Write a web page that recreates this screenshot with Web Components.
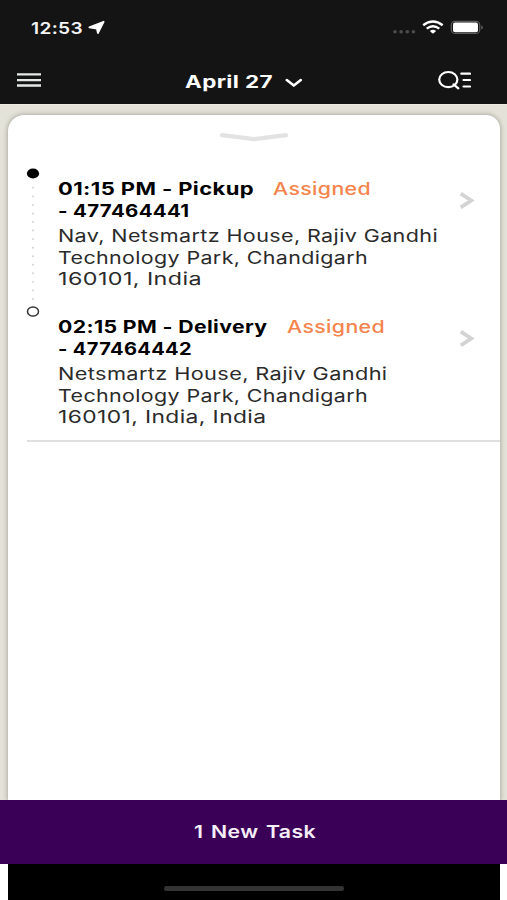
<!DOCTYPE html>
<html lang="en">
<head>
<meta charset="utf-8">
<title>Tasks</title>
<style>
    body {
        margin: 0;
        font-family: Inter, "Open Sans", sans-serif;
    }
</style>
</head>
<body>
<task-app>
    <status-bar slot="top" time="12:53"></status-bar>
    <app-header slot="top" date="April 27"></app-header>
    <task-card>
        <task-stop kind="pickup">
            <wide-text slot="title" width="196">01:15 PM - Pickup</wide-text>
            <wide-text slot="status" width="98">Assigned</wide-text>
            <wide-text slot="number" width="131.5">- 477464441</wide-text>
            <wide-text slot="address" width="380">Nav, Netsmartz House, Rajiv Gandhi</wide-text>
            <wide-text slot="address" width="310">Technology Park, Chandigarh</wide-text>
            <wide-text slot="address" width="144">160101, India</wide-text>
        </task-stop>
        <task-stop kind="delivery">
            <wide-text slot="title" width="209.5">02:15 PM - Delivery</wide-text>
            <wide-text slot="status" width="98">Assigned</wide-text>
            <wide-text slot="number" width="134">- 477464442</wide-text>
            <wide-text slot="address" width="329.5">Netsmartz House, Rajiv Gandhi</wide-text>
            <wide-text slot="address" width="310">Technology Park, Chandigarh</wide-text>
            <wide-text slot="address" width="208.5">160101, India, India</wide-text>
        </task-stop>
    </task-card>
    <new-task-bar slot="bottom"><wide-text width="122">1 New Task</wide-text></new-task-bar>
    <home-indicator slot="bottom"></home-indicator>
</task-app>

<script>
// One line of text, set in an extended width
class WideText extends HTMLElement {
    connectedCallback() {
        const width = Number(this.getAttribute('width'));
        this.attachShadow({ mode: 'open' });
        this.shadowRoot.innerHTML = `
            <style>
                :host {
                    display: block;
                    flex: none;
                    width: ${width}px;
                    white-space: nowrap;
                }
                span {
                    display: inline-block;
                    vertical-align: top;
                    transform-origin: 0 0;
                    letter-spacing: 0.3px;
                }
            </style>
            <span><slot></slot></span>
        `;
        const span = this.shadowRoot.querySelector('span');
        const natural = span.getBoundingClientRect().width;
        if (natural) {
            span.style.transform = `scaleX(${width / natural})`;
        }
    }
}

class TaskApp extends HTMLElement {
    connectedCallback() {
        this.attachShadow({ mode: 'open' });
        this.shadowRoot.innerHTML = `
            <style>
                :host {
                    display: flex;
                    flex-direction: column;
                    width: 507px;
                    height: 900px;
                    overflow: hidden;
                    background: #fff;
                }
                header {
                    height: 104px;
                    background: #141414;
                }
                main {
                    flex: 1;
                    display: flex;
                    box-sizing: border-box;
                    padding: 9.5px 7.5px 0;
                    background: #e4e3d9;
                    border-top: 1px solid #efebe4;
                    overflow: hidden;
                }
            </style>
            <header><slot name="top"></slot></header>
            <main><slot></slot></main>
            <footer><slot name="bottom"></slot></footer>
        `;
    }
}

class StatusBar extends HTMLElement {
    connectedCallback() {
        this.attachShadow({ mode: 'open' });
        this.shadowRoot.innerHTML = `
            <style>
                :host {
                    display: flex;
                    height: 54px;
                    box-sizing: border-box;
                    padding: 17px 23px 0 31px;
                    justify-content: space-between;
                    color: #f5f5f5;
                    font-size: 16.5px;
                    font-weight: 600;
                    line-height: 22px;
                }
                .left, .right {
                    display: flex;
                }
                .left {
                    gap: 5px;
                }
                svg {
                    display: block;
                }
            </style>
            <div class="left">
                <wide-text width="52">${this.getAttribute('time')}</wide-text>
                <svg width="18" height="22" viewBox="0 0 18 22">
                    <path d="M15.6 4.8 9.9 16 8.9 11.6 1.4 10.3Z" fill="#fff" stroke="#fff" stroke-width="1.8" stroke-linejoin="round"/>
                </svg>
            </div>
            <div class="right">
                <svg width="94" height="22" viewBox="390 17 94 22">
                    <g fill="#4d4d4d">
                        <circle cx="395" cy="31.8" r="1.8"/><circle cx="401.1" cy="31.8" r="1.8"/>
                        <circle cx="407.3" cy="31.8" r="1.8"/><circle cx="413.4" cy="31.8" r="1.8"/>
                    </g>
                    <g fill="none" stroke="#fff" stroke-width="2.4">
                        <path d="M423.2 25.2Q432.9 17.8 442.7 25.2"/>
                        <path d="M426.7 28.6Q432.9 23.7 439.3 28.6"/>
                    </g>
                    <path d="M429.8 30.9Q432.9 28.6 436.1 30.9L433.6 33.2Q432.9 33.7 432.3 33.2Z" fill="#fff"/>
                    <rect x="451.3" y="21.3" width="28.4" height="12.2" rx="3.6" fill="none" stroke="#5c5c5c" stroke-width="1.2"/>
                    <rect x="453" y="22.6" width="25" height="9.6" rx="2" fill="#fff"/>
                    <path d="M481.2 25.3Q483 26 483 27.4T481.2 29.5Z" fill="#5c5c5c"/>
                </svg>
            </div>
        `;
    }
}

class AppHeader extends HTMLElement {
    connectedCallback() {
        this.attachShadow({ mode: 'open' });
        this.shadowRoot.innerHTML = `
            <style>
                :host {
                    display: grid;
                    grid-template-columns: 1fr auto 1fr;
                    align-items: center;
                    height: 50px;
                    box-sizing: border-box;
                    padding: 2px 36px 0 17px;
                    color: #fff;
                    font-size: 17px;
                    font-weight: 700;
                    line-height: 22px;
                }
                .date {
                    display: flex;
                    align-items: center;
                    gap: 12px;
                    margin-left: -2px;
                    padding-top: 3px;
                }
                .search {
                    justify-self: end;
                }
                svg {
                    display: block;
                }
            </style>
            <svg width="24" height="16" viewBox="0 0 24 16">
                <path d="M0 2.3H24M0 8.1H24M0 13.5H24" stroke="#e6e8e8" stroke-width="2.3"/>
            </svg>
            <div class="date">
                <wide-text width="88">${this.getAttribute('date')}</wide-text>
                <svg width="17" height="22" viewBox="0 0 17 22">
                    <path d="M1.8 9.1 8.8 14.6 15.8 9.1" fill="none" stroke="#fff" stroke-width="2.6" stroke-linecap="round" stroke-linejoin="round"/>
                </svg>
            </div>
            <svg class="search" width="33" height="20" viewBox="438 70 33 20">
                <g fill="none" stroke="#fff" stroke-width="2.2" stroke-linecap="round">
                    <ellipse cx="448.3" cy="79.6" rx="9.1" ry="7.6"/>
                    <path d="M453.6 84.3 458.3 88.3M461.3 73.7H470M463.5 80H470M463.5 86.5H470"/>
                </g>
            </svg>
        `;
    }
}

class TaskCard extends HTMLElement {
    connectedCallback() {
        this.attachShadow({ mode: 'open' });
        this.shadowRoot.innerHTML = `
            <style>
                :host {
                    display: block;
                    flex: 1;
                    background: #fff;
                    border-radius: 16px 14px 0 0;
                    box-shadow: 0 0 4px 1px rgba(90, 88, 75, 0.38);
                }
                .handle {
                    display: block;
                    margin: 0 auto;
                    padding-top: 14px;
                }
                .stops {
                    margin-left: 19px;
                    padding-top: 19px;
                    border-bottom: 2px solid #e0e0e0;
                }
            </style>
            <svg class="handle" width="70" height="18" viewBox="0 0 70 18">
                <path d="M3 6.2 35 10.2 67 6.2" fill="none" stroke="#e2e2e2" stroke-width="4.2" stroke-linecap="round" stroke-linejoin="round"/>
            </svg>
            <div class="stops"><slot></slot></div>
        `;
    }
}

class TaskStop extends HTMLElement {
    connectedCallback() {
        const pickup = this.getAttribute('kind') === 'pickup';
        // the dotted line runs from the pickup down to the delivery
        const marker = pickup
            ? `<ellipse cx="6" cy="7.5" rx="6.1" ry="5.1" fill="#000"/>
               <path d="M6 21.8V134" stroke="#cfcfcf" stroke-width="1.9" stroke-linecap="round" stroke-dasharray="0 8.55"/>`
            : `<ellipse cx="6" cy="7.5" rx="5.5" ry="4.6" fill="#fff" stroke="#333" stroke-width="1.5"/>`;

        this.attachShadow({ mode: 'open' });
        this.shadowRoot.innerHTML = `
            <style>
                :host {
                    display: flex;
                    height: ${pickup ? 138 : 136.5}px;
                    font-size: 17.2px;
                    line-height: 21.5px;
                }
                .marker {
                    flex: none;
                    overflow: visible;
                }
                .text {
                    width: 395px;
                    margin-left: 19.5px;
                    padding-top: 12.8px;
                    color: #2b2b2b;
                }
                .title {
                    display: flex;
                    gap: 19px;
                    color: #000;
                    font-weight: 700;
                }
                .number {
                    color: #000;
                    font-weight: 700;
                    margin-bottom: 4px;
                }
                .status {
                    color: #f5844c;
                    font-weight: 500;
                }
                .arrow {
                    margin: 24px 0 0 6px;
                }
            </style>
            <svg class="marker" width="12" height="138" viewBox="0 0 12 138">${marker}</svg>
            <div class="text">
                <div class="title">
                    <slot name="title"></slot>
                    <div class="status"><slot name="status"></slot></div>
                </div>
                <div class="number"><slot name="number"></slot></div>
                <slot name="address"></slot>
            </div>
            <svg class="arrow" width="16" height="20" viewBox="0 0 16 20">
                <path d="M1.8 3.6 12.3 10.5 1.8 17.4" fill="none" stroke="#d3d3d3" stroke-width="3.7"/>
            </svg>
        `;
    }
}

class NewTaskBar extends HTMLElement {
    connectedCallback() {
        this.attachShadow({ mode: 'open' });
        this.shadowRoot.innerHTML = `
            <style>
                :host {
                    display: flex;
                    align-items: center;
                    justify-content: center;
                    height: 63.5px;
                    padding-left: 2px;
                    background: #3a0057;
                    color: #f6effa;
                    font-size: 17px;
                    font-weight: 600;
                    line-height: 22px;
                    word-spacing: 1.5px;
                }
            </style>
            <slot></slot>
        `;
    }
}

class HomeIndicator extends HTMLElement {
    connectedCallback() {
        this.attachShadow({ mode: 'open' });
        this.shadowRoot.innerHTML = `
            <style>
                :host {
                    display: flex;
                    justify-content: center;
                    height: 36.5px;
                    margin: 0 7.5px;
                    background: #000;
                }
                .pill {
                    width: 180px;
                    height: 5px;
                    margin-top: 22.5px;
                    border-radius: 3px;
                    background: #333;
                }
            </style>
            <div class="pill"></div>
        `;
    }
}

// containers first, so text is measured once its styles are in place
customElements.define('task-app', TaskApp);
customElements.define('status-bar', StatusBar);
customElements.define('app-header', AppHeader);
customElements.define('task-card', TaskCard);
customElements.define('task-stop', TaskStop);
customElements.define('new-task-bar', NewTaskBar);
customElements.define('home-indicator', HomeIndicator);
customElements.define('wide-text', WideText);
</script>
</body>
</html>
